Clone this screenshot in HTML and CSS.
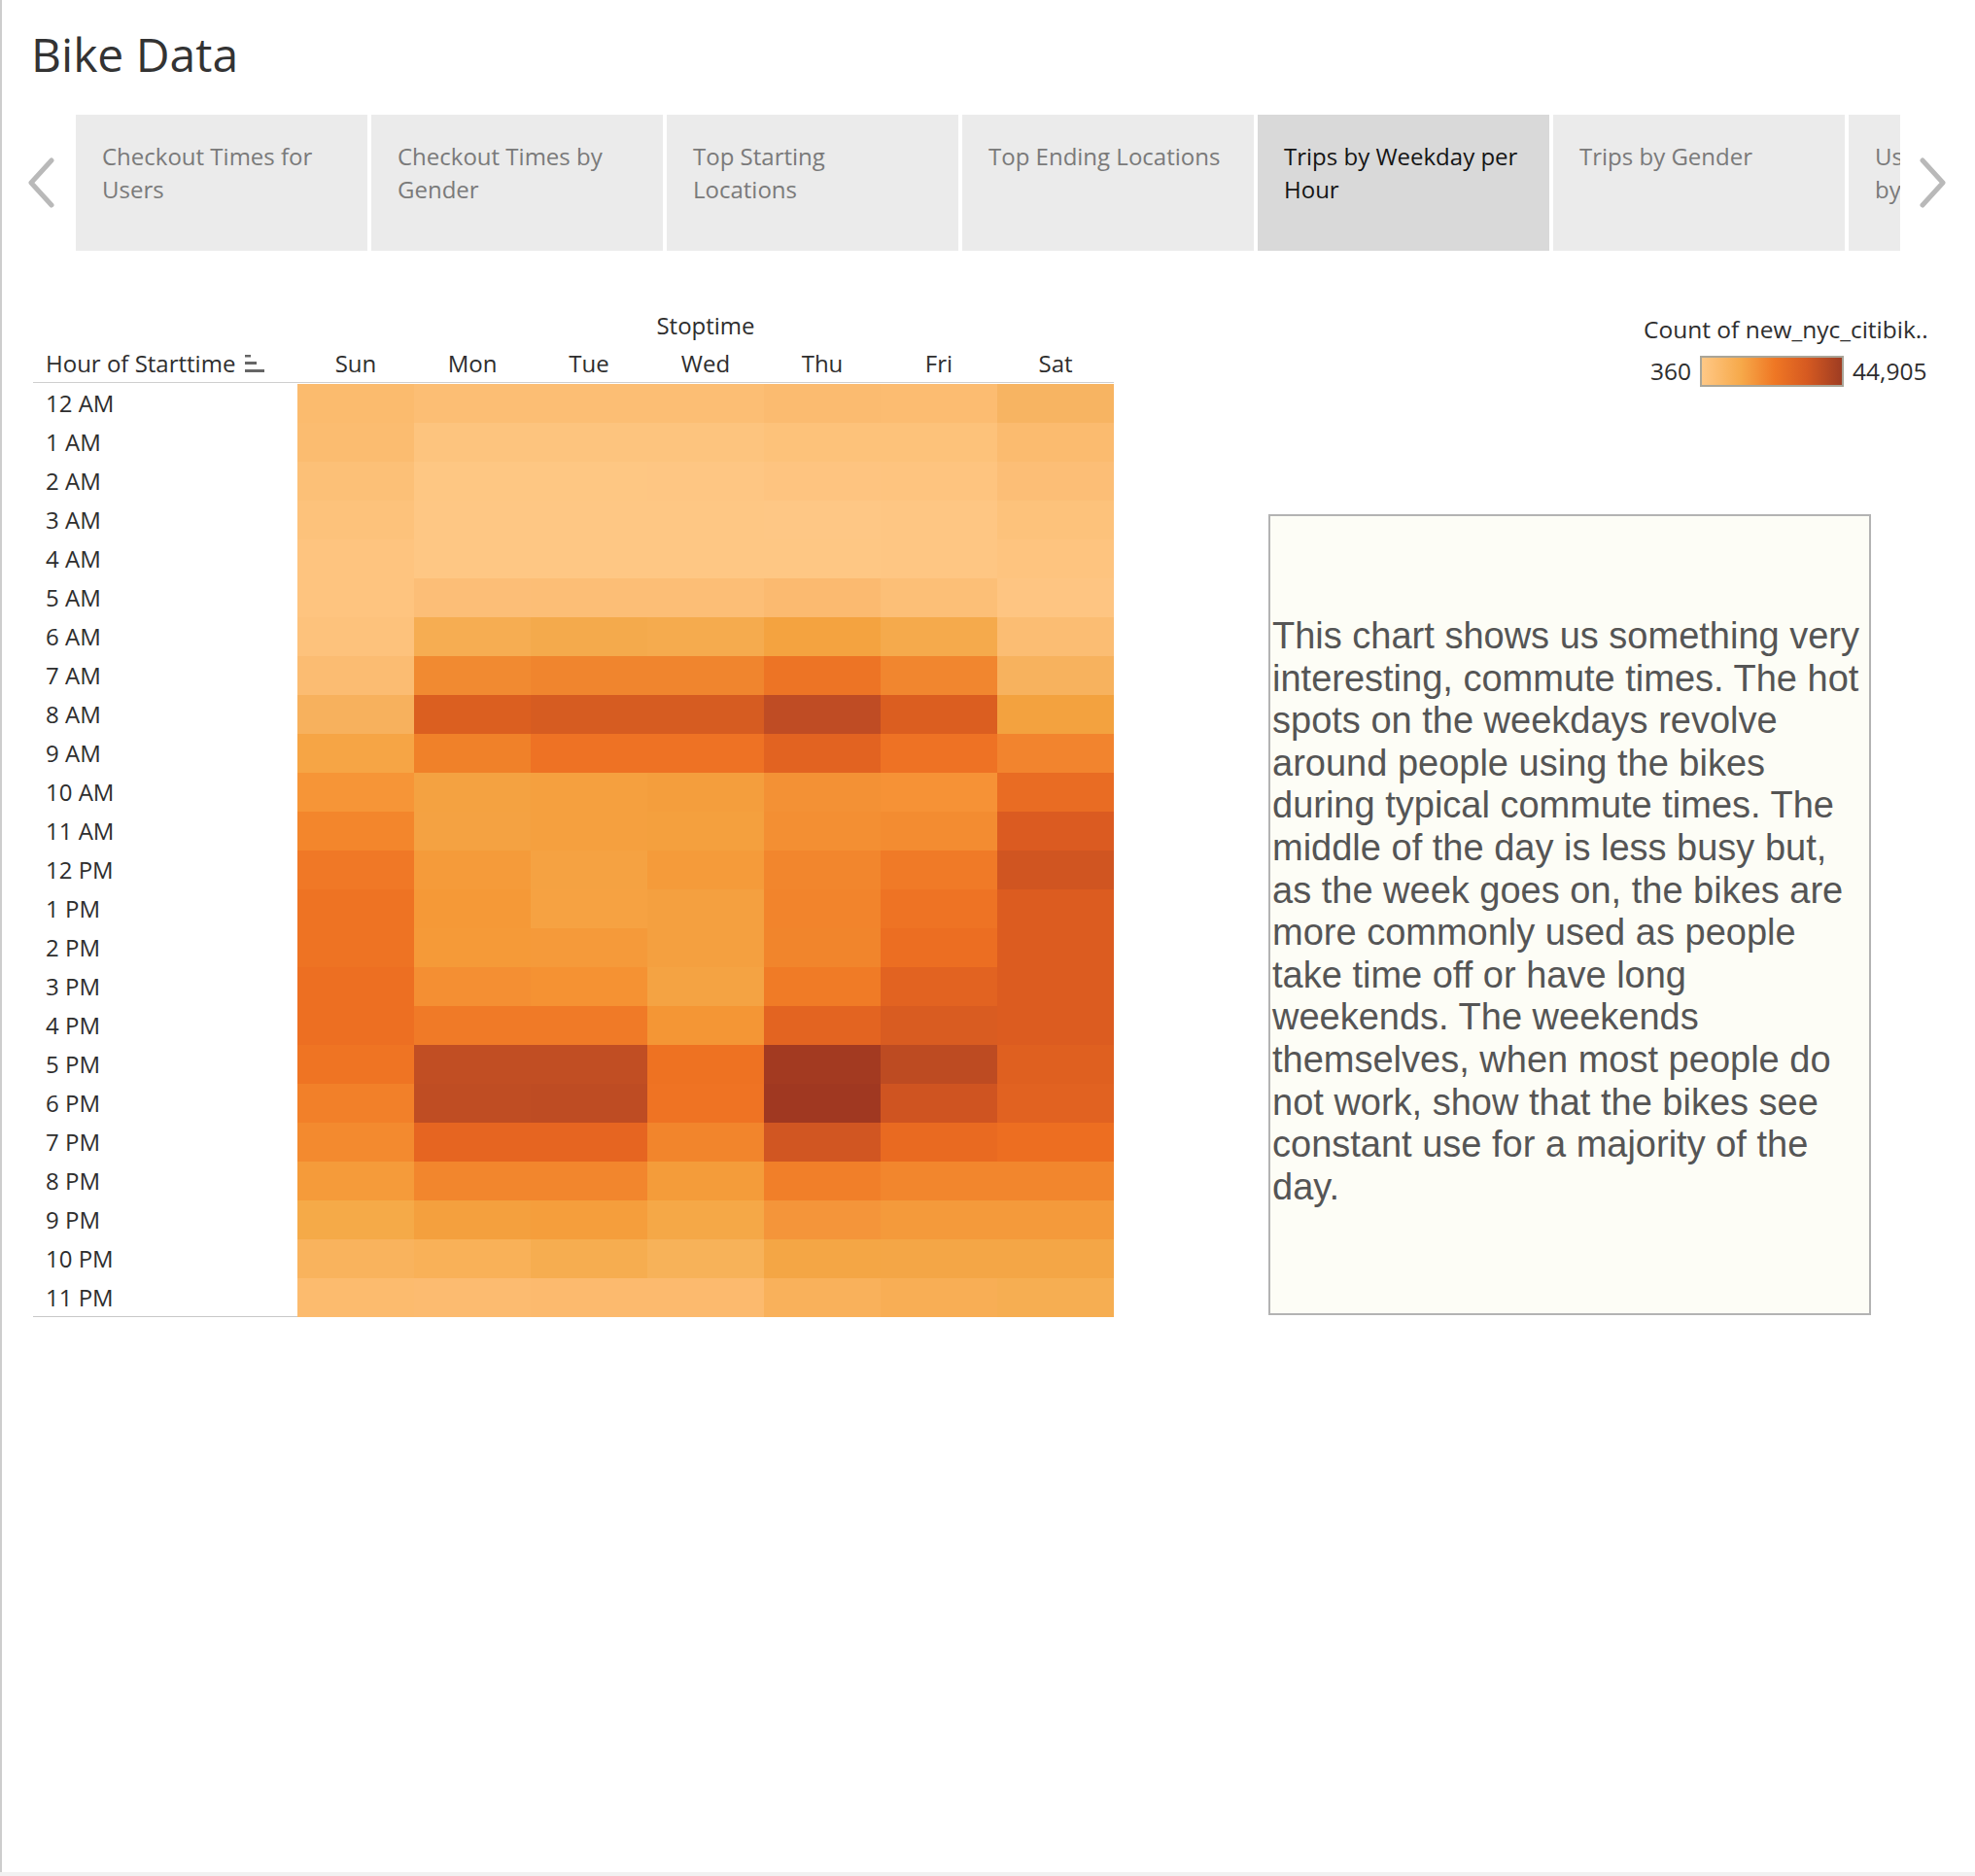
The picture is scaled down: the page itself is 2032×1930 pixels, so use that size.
FILE: index.html
```html
<!DOCTYPE html>
<html lang="en">
<head>
<meta charset="utf-8">
<title>Bike Data</title>
<link rel="stylesheet" href="styles.css">
</head>
<body>
<div class="dashboard">
  <h1 class="title">Bike Data</h1>

  <div class="tabbar">
    <div class="nav nav-left">
      <svg width="28" height="52" viewBox="0 0 28 52"><polyline points="25,3 4,26 25,49" fill="none" stroke="#b9b9b9" stroke-width="5" stroke-linecap="round" stroke-linejoin="round"/></svg>
    </div>
    <div class="tabs">
      <div class="tab">Checkout Times for<br>Users</div>
      <div class="tab">Checkout Times by<br>Gender</div>
      <div class="tab">Top Starting<br>Locations</div>
      <div class="tab">Top Ending Locations</div>
      <div class="tab active">Trips by Weekday per<br>Hour</div>
      <div class="tab">Trips by Gender</div>
      <div class="tab">Users<br>by Age</div>
    </div>
    <div class="nav nav-right">
      <svg width="28" height="52" viewBox="0 0 28 52"><polyline points="3,3 24,26 3,49" fill="none" stroke="#b9b9b9" stroke-width="5" stroke-linecap="round" stroke-linejoin="round"/></svg>
    </div>
  </div>

  <div class="content">
    <div class="chart">
      <div class="grid">
        <div class="stoptime">Stoptime</div>
        <div class="hcell hlabel">Hour of Starttime <svg class="sort" width="20" height="19" viewBox="0 0 20 19"><rect x="0" y="1" width="6" height="2.5" fill="#666"/><rect x="0" y="8" width="12" height="3" fill="#666"/><rect x="0" y="16" width="20" height="3" fill="#666"/></svg></div>
        <div class="hcell">Sun</div><div class="hcell">Mon</div><div class="hcell">Tue</div><div class="hcell">Wed</div><div class="hcell">Thu</div><div class="hcell">Fri</div><div class="hcell">Sat</div>

        <div class="rlabel">12 AM</div><div class="c" style="background:#fbbb6e"></div><div class="c" style="background:#fcbe74"></div><div class="c" style="background:#fcbe74"></div><div class="c" style="background:#fcbe74"></div><div class="c" style="background:#fbbb70"></div><div class="c" style="background:#fcbc71"></div><div class="c" style="background:#f7b462"></div>
        <div class="rlabel">1 AM</div><div class="c" style="background:#fbbc70"></div><div class="c" style="background:#fdc47e"></div><div class="c" style="background:#fdc47e"></div><div class="c" style="background:#fdc47e"></div><div class="c" style="background:#fdc27a"></div><div class="c" style="background:#fdc27a"></div><div class="c" style="background:#fbbb6f"></div>
        <div class="rlabel">2 AM</div><div class="c" style="background:#fcc077"></div><div class="c" style="background:#fec783"></div><div class="c" style="background:#fec783"></div><div class="c" style="background:#fec683"></div><div class="c" style="background:#fec480"></div><div class="c" style="background:#fec47f"></div><div class="c" style="background:#fcbe76"></div>
        <div class="rlabel">3 AM</div><div class="c" style="background:#fdc27b"></div><div class="c" style="background:#fec784"></div><div class="c" style="background:#fec784"></div><div class="c" style="background:#fec784"></div><div class="c" style="background:#fec785"></div><div class="c" style="background:#fec683"></div><div class="c" style="background:#fdc27b"></div>
        <div class="rlabel">4 AM</div><div class="c" style="background:#fec47f"></div><div class="c" style="background:#fec784"></div><div class="c" style="background:#fec784"></div><div class="c" style="background:#fec784"></div><div class="c" style="background:#fec784"></div><div class="c" style="background:#fec683"></div><div class="c" style="background:#fec47f"></div>
        <div class="rlabel">5 AM</div><div class="c" style="background:#fec47f"></div><div class="c" style="background:#fcbe77"></div><div class="c" style="background:#fcbe76"></div><div class="c" style="background:#fcbe76"></div><div class="c" style="background:#fbba70"></div><div class="c" style="background:#fcbf77"></div><div class="c" style="background:#fec582"></div>
        <div class="rlabel">6 AM</div><div class="c" style="background:#fdc27c"></div><div class="c" style="background:#f6ad52"></div><div class="c" style="background:#f4aa4c"></div><div class="c" style="background:#f5ab4e"></div><div class="c" style="background:#f4a340"></div><div class="c" style="background:#f5aa4c"></div><div class="c" style="background:#fbbd73"></div>
        <div class="rlabel">7 AM</div><div class="c" style="background:#fbbc72"></div><div class="c" style="background:#f18a31"></div><div class="c" style="background:#f0852e"></div><div class="c" style="background:#f0852e"></div><div class="c" style="background:#ed7425"></div><div class="c" style="background:#f1862f"></div><div class="c" style="background:#f7b25e"></div>
        <div class="rlabel">8 AM</div><div class="c" style="background:#f7b15d"></div><div class="c" style="background:#db5f20"></div><div class="c" style="background:#d65c21"></div><div class="c" style="background:#d65c21"></div><div class="c" style="background:#bf4c24"></div><div class="c" style="background:#db5e20"></div><div class="c" style="background:#f3a23f"></div>
        <div class="rlabel">9 AM</div><div class="c" style="background:#f6a545"></div><div class="c" style="background:#f08129"></div><div class="c" style="background:#ee7224"></div><div class="c" style="background:#ee7224"></div><div class="c" style="background:#e26321"></div><div class="c" style="background:#ee7224"></div><div class="c" style="background:#f2842e"></div>
        <div class="rlabel">10 AM</div><div class="c" style="background:#f69537"></div><div class="c" style="background:#f4a241"></div><div class="c" style="background:#f5a03f"></div><div class="c" style="background:#f49e3d"></div><div class="c" style="background:#f39135"></div><div class="c" style="background:#f69236"></div><div class="c" style="background:#e96c23"></div>
        <div class="rlabel">11 AM</div><div class="c" style="background:#f3862c"></div><div class="c" style="background:#f4a242"></div><div class="c" style="background:#f5a03f"></div><div class="c" style="background:#f4a03e"></div><div class="c" style="background:#f38f33"></div><div class="c" style="background:#f38c31"></div><div class="c" style="background:#db5b21"></div>
        <div class="rlabel">12 PM</div><div class="c" style="background:#f07826"></div><div class="c" style="background:#f59b3a"></div><div class="c" style="background:#f5a242"></div><div class="c" style="background:#f59b3a"></div><div class="c" style="background:#f2862d"></div><div class="c" style="background:#f07a27"></div><div class="c" style="background:#d05521"></div>
        <div class="rlabel">1 PM</div><div class="c" style="background:#ee7323"></div><div class="c" style="background:#f59937"></div><div class="c" style="background:#f6a242"></div><div class="c" style="background:#f4a040"></div><div class="c" style="background:#f2842c"></div><div class="c" style="background:#ee7324"></div><div class="c" style="background:#dc5c20"></div>
        <div class="rlabel">2 PM</div><div class="c" style="background:#ee7323"></div><div class="c" style="background:#f59a38"></div><div class="c" style="background:#f59a3a"></div><div class="c" style="background:#f4a040"></div><div class="c" style="background:#f1852c"></div><div class="c" style="background:#ec6e22"></div><div class="c" style="background:#dc5c20"></div>
        <div class="rlabel">3 PM</div><div class="c" style="background:#ed6f22"></div><div class="c" style="background:#f48f33"></div><div class="c" style="background:#f59233"></div><div class="c" style="background:#f4a343"></div><div class="c" style="background:#f07b26"></div><div class="c" style="background:#e26321"></div><div class="c" style="background:#dc5c20"></div>
        <div class="rlabel">4 PM</div><div class="c" style="background:#ed6f22"></div><div class="c" style="background:#f07a27"></div><div class="c" style="background:#f07a27"></div><div class="c" style="background:#f49635"></div><div class="c" style="background:#e36421"></div><div class="c" style="background:#d95c21"></div><div class="c" style="background:#dc5c20"></div>
        <div class="rlabel">5 PM</div><div class="c" style="background:#ef7423"></div><div class="c" style="background:#c14e23"></div><div class="c" style="background:#c14e23"></div><div class="c" style="background:#ee7222"></div><div class="c" style="background:#a33a21"></div><div class="c" style="background:#bd4b22"></div><div class="c" style="background:#df6020"></div>
        <div class="rlabel">6 PM</div><div class="c" style="background:#f28029"></div><div class="c" style="background:#bf4d23"></div><div class="c" style="background:#be4c23"></div><div class="c" style="background:#ef7323"></div><div class="c" style="background:#a03821"></div><div class="c" style="background:#cf5421"></div><div class="c" style="background:#e16221"></div>
        <div class="rlabel">7 PM</div><div class="c" style="background:#f38a2f"></div><div class="c" style="background:#e66521"></div><div class="c" style="background:#e66521"></div><div class="c" style="background:#f2852c"></div><div class="c" style="background:#d15622"></div><div class="c" style="background:#e96a21"></div><div class="c" style="background:#ed6e21"></div>
        <div class="rlabel">8 PM</div><div class="c" style="background:#f59b3a"></div><div class="c" style="background:#f2862d"></div><div class="c" style="background:#f2862d"></div><div class="c" style="background:#f49c3a"></div><div class="c" style="background:#f17f29"></div><div class="c" style="background:#f2862d"></div><div class="c" style="background:#f2862d"></div>
        <div class="rlabel">9 PM</div><div class="c" style="background:#f5aa48"></div><div class="c" style="background:#f4a03e"></div><div class="c" style="background:#f59e3c"></div><div class="c" style="background:#f5a847"></div><div class="c" style="background:#f4953a"></div><div class="c" style="background:#f49a3b"></div><div class="c" style="background:#f49a3b"></div>
        <div class="rlabel">10 PM</div><div class="c" style="background:#f9b35d"></div><div class="c" style="background:#f9b158"></div><div class="c" style="background:#f6ad50"></div><div class="c" style="background:#f7b259"></div><div class="c" style="background:#f4a645"></div><div class="c" style="background:#f4a646"></div><div class="c" style="background:#f4a646"></div>
        <div class="rlabel">11 PM</div><div class="c" style="background:#fcbb6e"></div><div class="c" style="background:#fcbb70"></div><div class="c" style="background:#fcba6e"></div><div class="c" style="background:#fcba6e"></div><div class="c" style="background:#f9b15b"></div><div class="c" style="background:#f8ae55"></div><div class="c" style="background:#f6ae52"></div>
      </div>
      <div class="grid-bottom"></div>
    </div>

    <div class="side">
      <div class="legend">
        <div class="legend-title">Count of new_nyc_citibik..</div>
        <div class="legend-row">
          <span class="legend-num">360</span>
          <span class="legend-bar"></span>
          <span class="legend-num">44,905</span>
        </div>
      </div>
      <div class="note">
        <p class="note-text">This chart shows us something very<br>interesting, commute times. The hot<br>spots on the weekdays revolve<br>around people using the bikes<br>during typical commute times. The<br>middle of the day is less busy but,<br>as the week goes on, the bikes are<br>more commonly used as people<br>take time off or have long<br>weekends. The weekends<br>themselves, when most people do<br>not work, show that the bikes see<br>constant use for a majority of the<br>day.</p>
      </div>
    </div>
  </div>
</div>
<div class="footer-strip"></div>
</body>
</html>
```

FILE: styles.css
```css
html, body {
  margin: 0;
  padding: 0;
  background: #ffffff;
}

body {
  font-family: "Open Sans", "Noto Sans", sans-serif;
  color: #2e2e2e;
}

.dashboard {
  border-left: 2px solid #cdcdcd;
  height: 1926px;
  box-sizing: border-box;
  overflow: hidden;
}

.footer-strip {
  height: 4px;
  background: #f1f1f1;
}

.title {
  margin: 0;
  padding: 24px 0 0 30px;
  font-size: 48px;
  font-weight: 400;
  line-height: 64px;
  color: #333333;
}

/* ---------- tabs ---------- */
.tabbar {
  display: flex;
  align-items: center;
  height: 140px;
  margin-top: 30px;
}

.nav {
  display: flex;
  align-items: center;
  height: 140px;
}

.nav-left {
  width: 76px;
  padding-left: 26px;
  box-sizing: border-box;
}

.nav-right {
  margin-left: 20px;
}

.tabs {
  display: flex;
  gap: 4px;
  width: 1877px;
  height: 140px;
  overflow: hidden;
  flex: 0 0 auto;
}

.tab {
  flex: 0 0 300px;
  box-sizing: border-box;
  height: 140px;
  padding: 26px 10px 0 27px;
  background: #ebebeb;
  color: #7a7a7a;
  font-size: 24px;
  line-height: 34px;
  white-space: nowrap;
}

.tab.active {
  background: #d9d9d9;
  color: #151515;
}

/* ---------- content ---------- */
.content {
  display: flex;
  align-items: flex-start;
  padding-left: 32px;
}

.chart {
  width: 1112px;
  margin-top: 57px;
}

.grid {
  display: grid;
  grid-template-columns: 272px repeat(7, 120px);
  grid-auto-rows: 40px;
  font-size: 24px;
  color: #2e2e2e;
}

.stoptime {
  grid-column: 2 / span 7;
  text-align: center;
  line-height: 40px;
  height: 40px;
}

.hcell {
  height: 38px;
  line-height: 38px;
  text-align: center;
  border-bottom: 1px solid #cfcfcf;
  white-space: nowrap;
  align-self: start;
}

.hlabel {
  text-align: left;
  padding-left: 13px;
}

.sort {
  vertical-align: baseline;
  margin-left: 3px;
}

.grid-bottom {
  border-top: 1px solid #c8c8c8;
  margin-top: -1px;
  height: 0;
}

.rlabel {
  padding-left: 13px;
  line-height: 40px;
  white-space: nowrap;
}

.c {
  height: 40px;
}

/* ---------- side column ---------- */
.side {
  margin-left: 159px;
  width: 700px;
  margin-top: 64px;
}

.legend {
  margin-left: 386px;
}

.legend-title {
  font-size: 24.5px;
  line-height: 34px;
  white-space: nowrap;
  color: #2e2e2e;
}

.legend-row {
  display: flex;
  align-items: center;
  margin-top: 9px;
  padding-left: 7px;
  gap: 9px;
}

.legend-num {
  font-size: 24.5px;
  line-height: 34px;
  color: #2e2e2e;
}

.legend-bar {
  display: block;
  width: 144px;
  height: 28px;
  border: 2px solid #a9a598;
  background: linear-gradient(to right, #ffc886 0%, #f6a94a 28%, #ef7724 52%, #d65a21 75%, #9e3c22 100%);
}

.note {
  margin-top: 130px;
  width: 620px;
  height: 824px;
  box-sizing: border-box;
  border: 2px solid #b3b3b3;
  background: #fdfdf6;
  padding: 102px 0 0 2px;
}

.note-text {
  margin: 0;
  font-family: "Liberation Sans", Arial, sans-serif;
  font-size: 38px;
  line-height: 43.6px;
  color: #555555;
  white-space: nowrap;
}
```
